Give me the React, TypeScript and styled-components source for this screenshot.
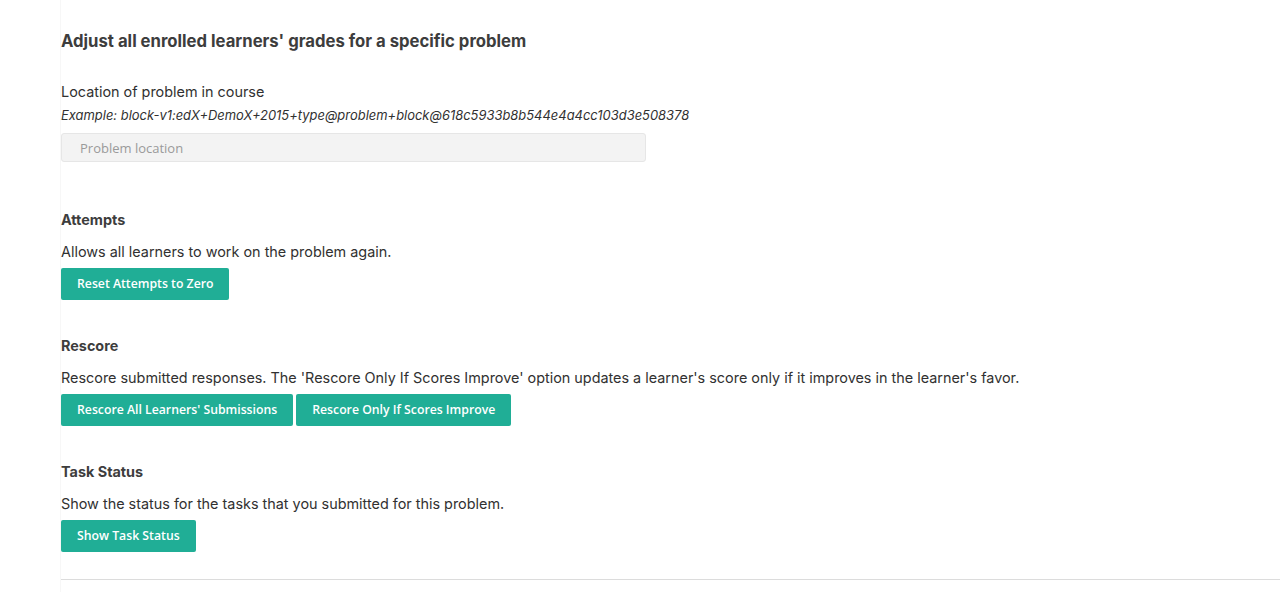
import React from "react";
import styled, { createGlobalStyle } from "styled-components";

const Global = createGlobalStyle`
  html, body { margin: 0; padding: 0; background: #fff; }
  body { font-family: Inter, "Noto Sans", sans-serif; color: #313131; }
`;

const Page = styled.div`
  display: flex;
  min-height: 592px;
`;

const Gutter = styled.div`
  width: 60px;
  flex: none;
  border-right: 1px solid #f7f7f7;
`;

const Content = styled.main`
  flex: 1;
  padding-top: 31px;
  display: flex;
  flex-direction: column;
`;

const Title = styled.h2`
  margin: 0 0 31px;
  font-size: 16.7px;
  font-weight: 700;
  line-height: 20px;
  color: #3d3d3d;
`;

const Field = styled.div`
  display: flex;
  flex-direction: column;
  margin-bottom: 48px;
`;

const Label = styled.label`
  font-size: 14.4px;
  line-height: 20px;
  color: #313131;
`;

const Example = styled.em`
  font-size: 12.95px;
  line-height: 16px;
  margin-top: 5px;
  color: #313131;
`;

const Input = styled.input`
  margin-top: 10px;
  width: 585px;
  height: 29px;
  box-sizing: border-box;
  border: 1px solid #e6e6e6;
  border-radius: 3px;
  background: #f3f3f3;
  padding: 0 18px;
  font-family: "Open Sans", sans-serif;
  font-size: 13px;
  color: #333;
  outline: none;
  &::placeholder { color: #9a9a9a; }
`;

const Section = styled.section`
  display: flex;
  flex-direction: column;
  margin-bottom: 36.5px;
`;

const SectionTitle = styled.h3`
  margin: 0;
  font-size: 14.4px;
  font-weight: 700;
  line-height: 20px;
  color: #3d3d3d;
`;

const Desc = styled.p`
  margin: 12px 0 0;
  font-size: 14.4px;
  line-height: 20px;
  color: #313131;
`;

const Buttons = styled.div`
  display: flex;
  gap: 3px;
  margin-top: 5.5px;
`;

const Button = styled.button`
  height: 32px;
  padding: 0 16px;
  border: none;
  border-radius: 2px;
  background: #20ae96;
  color: #fff;
  font-family: "Open Sans", sans-serif;
  font-weight: 600;
  font-size: 12.25px;
  cursor: pointer;
`;

const Rule = styled.hr`
  margin: -9px 0 0;
  border: none;
  border-top: 1px solid #dcdcdc;
  height: 0;
`;

export default function App() {
  return (
    <>
      <Global />
      <Page>
        <Gutter />
        <Content>
          <Title>Adjust all enrolled learners' grades for a specific problem</Title>
          <Field>
            <Label>Location of problem in course</Label>
            <Example>Example: block-v1:edX+DemoX+2015+type@problem+block@618c5933b8b544e4a4cc103d3e508378</Example>
            <Input placeholder="Problem location" />
          </Field>
          <Section>
            <SectionTitle>Attempts</SectionTitle>
            <Desc>Allows all learners to work on the problem again.</Desc>
            <Buttons>
              <Button>Reset Attempts to Zero</Button>
            </Buttons>
          </Section>
          <Section>
            <SectionTitle>Rescore</SectionTitle>
            <Desc>Rescore submitted responses. The 'Rescore Only If Scores Improve' option updates a learner's score only if it improves in the learner's favor.</Desc>
            <Buttons>
              <Button>Rescore All Learners' Submissions</Button>
              <Button>Rescore Only If Scores Improve</Button>
            </Buttons>
          </Section>
          <Section>
            <SectionTitle>Task Status</SectionTitle>
            <Desc>Show the status for the tasks that you submitted for this problem.</Desc>
            <Buttons>
              <Button>Show Task Status</Button>
            </Buttons>
          </Section>
          <Rule />
        </Content>
      </Page>
    </>
  );
}
